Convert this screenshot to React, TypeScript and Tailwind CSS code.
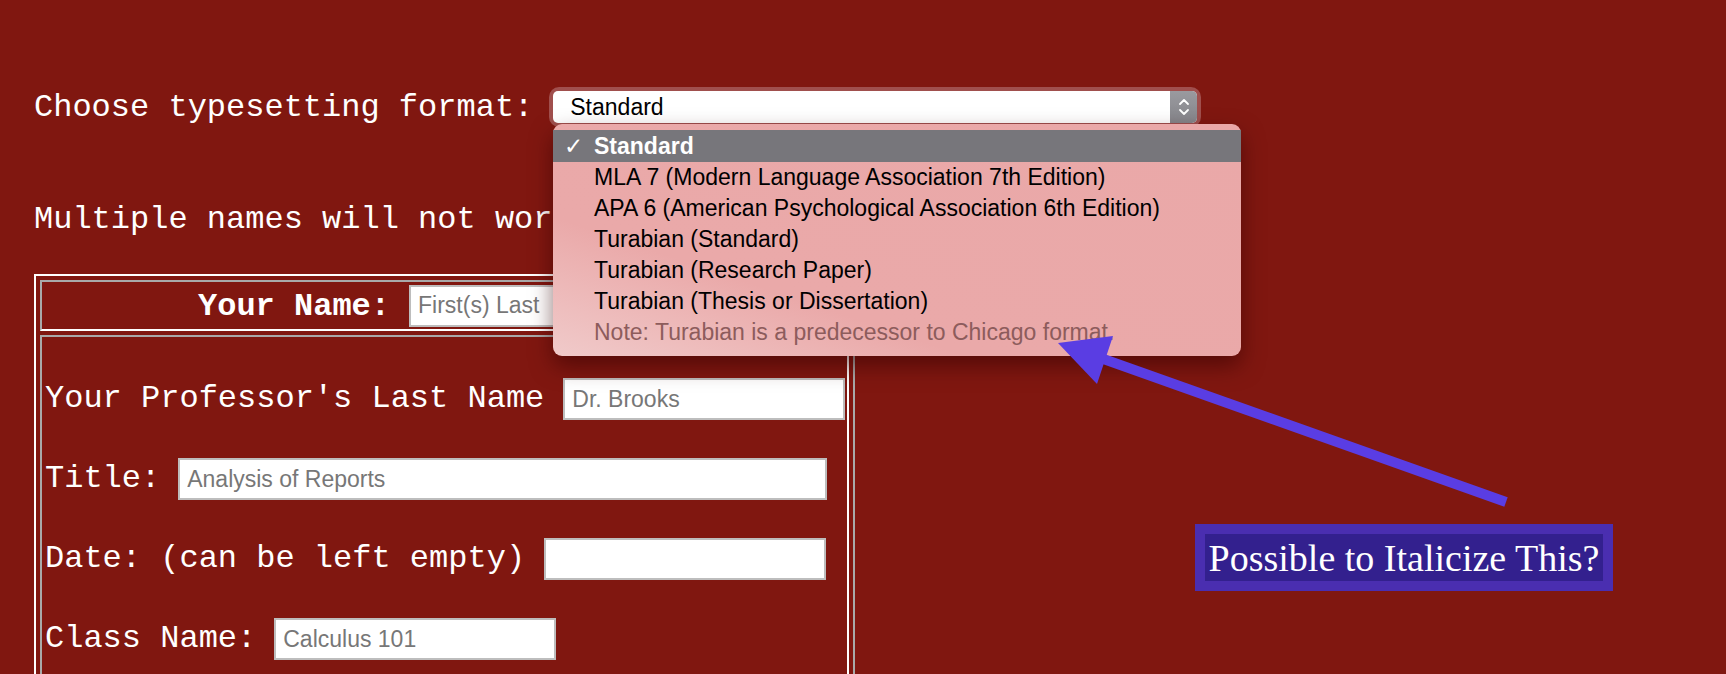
import React from "react";

const mono = { fontFamily: '"Courier New", "Liberation Mono", monospace' };
const sans = { fontFamily: '"Liberation Sans", Arial, sans-serif' };

const formats = [
  "MLA 7 (Modern Language Association 7th Edition)",
  "APA 6 (American Psychological Association 6th Edition)",
  "Turabian (Standard)",
  "Turabian (Research Paper)",
  "Turabian (Thesis or Dissertation)",
];

function TextBox({ width, placeholder }: { width: string; placeholder?: string }) {
  return (
    <input
      type="text"
      placeholder={placeholder}
      style={sans}
      className={`${width} h-[42px] bg-white border-2 border-[#bdbdbd] px-[7px] text-[23px] text-black placeholder:text-[#777777] outline-none`}
    />
  );
}

function Stepper() {
  return (
    <div className="w-[27px] h-full bg-linear-to-b from-[#9a9a9f] to-[#85858a] rounded-r-[5px] flex items-center justify-center">
      <svg width="14" height="22" viewBox="0 0 14 22" fill="none" stroke="white" strokeWidth="1.8" strokeLinecap="round" strokeLinejoin="round">
        <path d="M3 8 L7 4 L11 8" />
        <path d="M3 14 L7 18 L11 14" />
      </svg>
    </div>
  );
}

export default function App() {
  return (
    <div className="relative w-[1726px] h-[674px] overflow-hidden bg-[#801710] text-white" style={mono}>
      <div className="pl-[34px] pt-[87px]">
        {/* format picker */}
        <div className="flex items-center h-[40px]">
          <span className="text-[32px] leading-[40px] mt-[2px]">Choose typesetting format:</span>
          <div className="ml-[16px] w-[652px] h-[40px] rounded-[10px] bg-[#a04f4d] p-[4px]">
            <div className="flex h-full bg-white rounded-[5px]">
              <div className="flex-1 flex items-center pl-[17px] text-[23px] text-black" style={sans}>
                Standard
              </div>
              <Stepper />
            </div>
          </div>
        </div>

        <div className="mt-[73px] text-[32px] leading-[40px]">Multiple names will not work at this time.</div>

        {/* form table */}
        <div className="mt-[34px] w-[821px] border-2 border-t-white border-l-white border-r-[#a9a9a9] border-b-[#a9a9a9] p-[4px] flex flex-col gap-[4px]">
          <div className="h-[51px] border-2 border-t-[#a9a9a9] border-l-[#a9a9a9] border-r-white border-b-white flex items-center justify-center">
            <span className="text-[32px] font-bold mr-[19px] mt-[3px]">Your Name:</span>
            <TextBox width="w-[282px]" placeholder="First(s) Last" />
          </div>
          <div className="h-[400px] border-2 border-t-[#a9a9a9] border-l-[#a9a9a9] border-r-white border-b-white pl-[3px] pt-[41px] flex flex-col gap-[38px] text-[32px]">
            <div className="flex items-center h-[42px]">
              <span className="mr-[19px]">Your Professor's Last Name</span>
              <TextBox width="w-[282px]" placeholder="Dr. Brooks" />
            </div>
            <div className="flex items-center h-[42px]">
              <span className="mr-[18px]">Title:</span>
              <TextBox width="w-[649px]" placeholder="Analysis of Reports" />
            </div>
            <div className="flex items-center h-[42px]">
              <span className="mr-[19px]">Date: (can be left empty)</span>
              <TextBox width="w-[282px]" />
            </div>
            <div className="flex items-center h-[42px]">
              <span className="mr-[18px]">Class Name:</span>
              <TextBox width="w-[282px]" placeholder="Calculus 101" />
            </div>
          </div>
        </div>
      </div>

      {/* open select menu */}
      <div
        className="absolute left-[553px] top-[124px] w-[688px] h-[232px] rounded-[9px] pt-[6px] text-[23px] text-black bg-linear-to-tr from-[#f0caca] via-[#eaa9a9] via-30% to-[#eaa8a8] shadow-[0_10px_22px_rgba(50,0,0,0.55)]"
        style={sans}
      >
        <div className="h-[32px] bg-[#77767b] text-white font-bold flex items-center">
          <span className="w-[41px] pl-[11px] font-bold" style={{ fontFamily: '"DejaVu Sans", sans-serif' }}>✓</span>
          <span>Standard</span>
        </div>
        {formats.map((f) => (
          <div key={f} className="h-[31px] flex items-center pl-[41px]">
            {f}
          </div>
        ))}
        <div className="h-[31px] flex items-center pl-[41px] text-[#8d5c5c]">
          Note: Turabian is a predecessor to Chicago format.
        </div>
      </div>

      {/* annotation arrow */}
      <svg className="absolute left-0 top-0" width="1726" height="674" viewBox="0 0 1726 674">
        <line x1="1506" y1="502" x2="1095" y2="356" stroke="#5a3de3" strokeWidth="10" />
        <polygon points="1058,343 1113,336 1097,384" fill="#5a3de3" />
      </svg>

      <div className="absolute left-[1195px] top-[524px] w-[418px] h-[67px] bg-[#4a2eb0] p-[10px]">
        <div
          className="h-full bg-[#33208e] flex items-center justify-center text-[38px] text-white leading-none"
          style={{ fontFamily: '"Liberation Serif", "Times New Roman", serif' }}
        >
          Possible to Italicize This?
        </div>
      </div>
    </div>
  );
}
